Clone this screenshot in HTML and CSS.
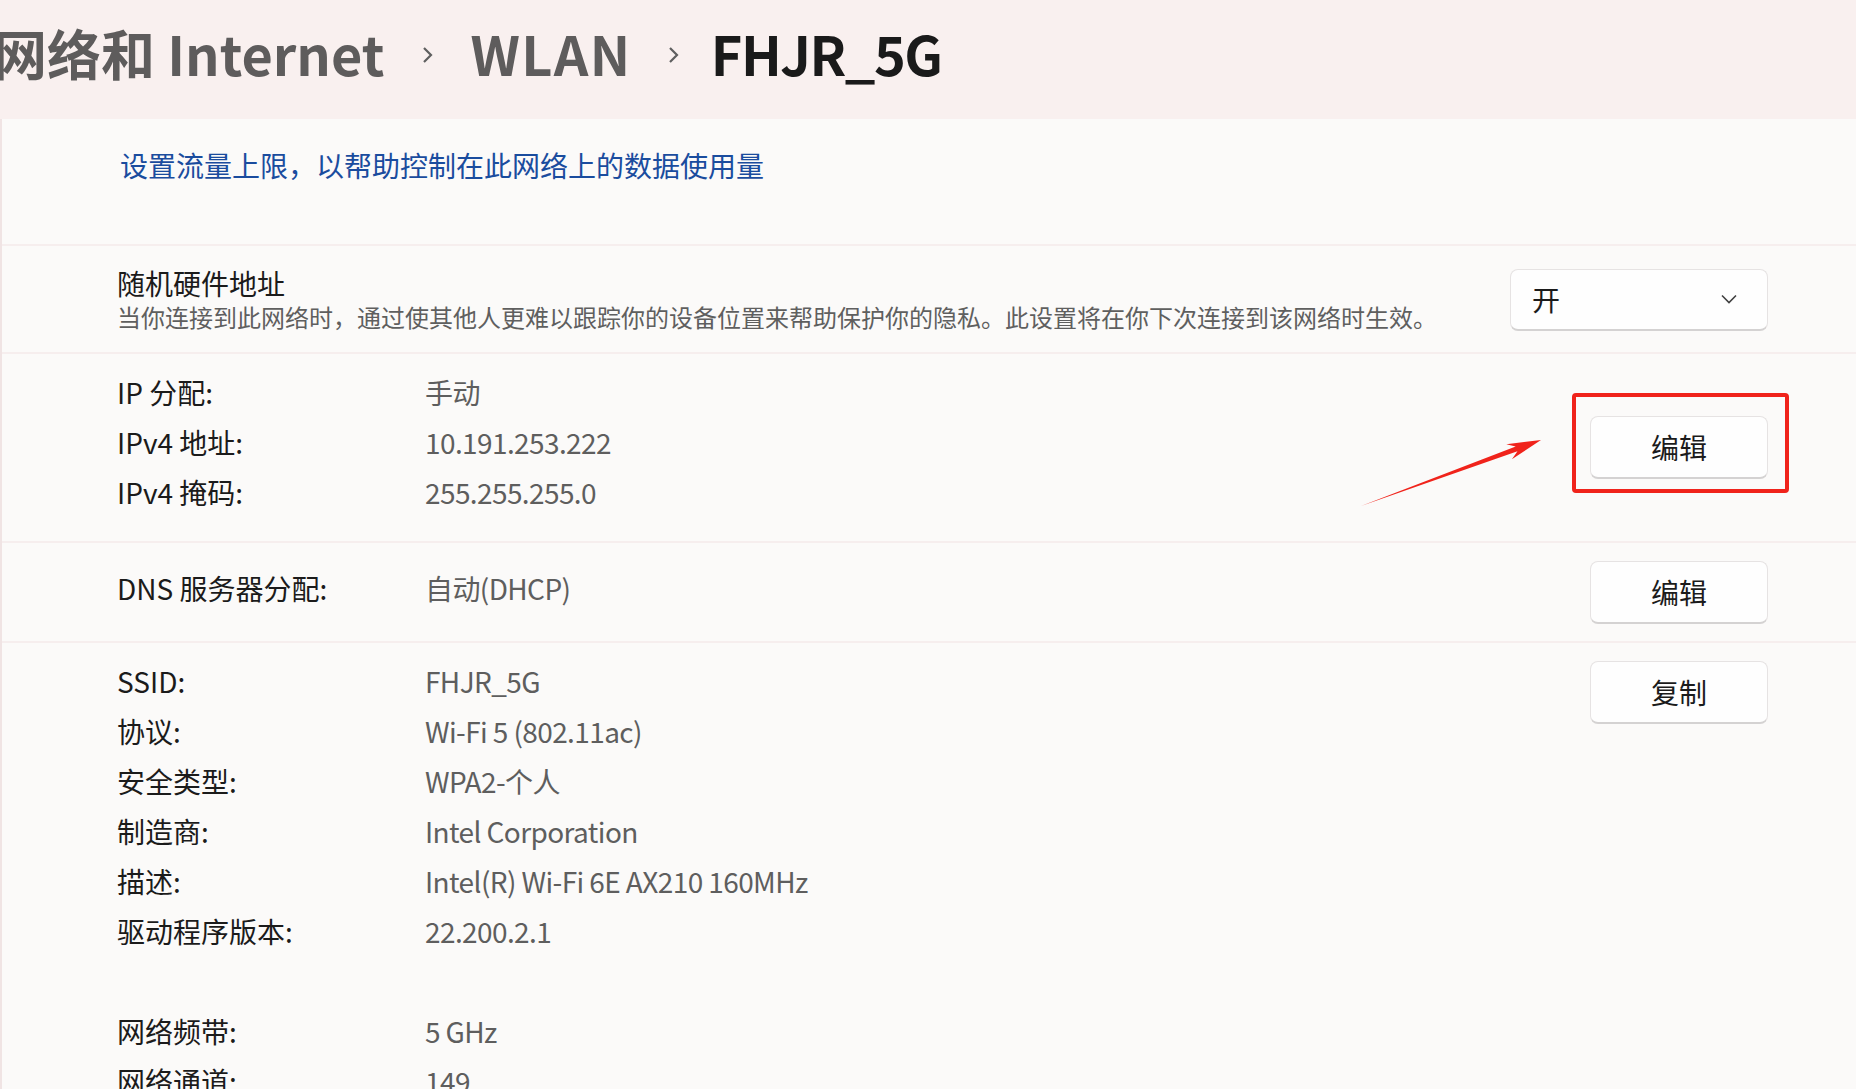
FILE: index.html
```html
<!DOCTYPE html>
<html>
<head>
    <title>WLAN - FHJR_5G</title>
    <link rel="stylesheet" href="styles.css">
</head>
<body>
    <header class="crumbs">
        <span class="crumb">网络和 Internet</span>
        <svg class="crumb-sep" width="12" height="18" viewBox="0 0 12 18"><path d="M2 2 L9 9 L2 16" fill="none" stroke="#5f5f5f" stroke-width="2.2"/></svg>
        <span class="crumb wide">WLAN</span>
        <svg class="crumb-sep last" width="12" height="18" viewBox="0 0 12 18"><path d="M2 2 L9 9 L2 16" fill="none" stroke="#5f5f5f" stroke-width="2.2"/></svg>
        <span class="crumb current">FHJR_5G</span>
    </header>

    <main class="panel">
        <section class="card card-link">
            <a class="link" href="javascript:void(0);">设置流量上限，以帮助控制在此网络上的数据使用量</a>
        </section>

        <section class="card card-setting">
            <div class="setting-text">
                <div class="setting-title">随机硬件地址</div>
                <div class="setting-desc">当你连接到此网络时，通过使其他人更难以跟踪你的设备位置来帮助保护你的隐私。此设置将在你下次连接到该网络时生效。</div>
            </div>
            <div class="dropdown">
                <span>开</span>
                <svg width="16" height="10" viewBox="0 0 16 10"><path d="M1 1.5 L8 8.5 L15 1.5" fill="none" stroke="#404040" stroke-width="1.6"/></svg>
            </div>
        </section>

        <section class="card card-info card-ip">
            <div class="info-list">
                <div class="info-row"><span class="label">IP 分配:</span><span class="value">手动</span></div>
                <div class="info-row"><span class="label">IPv4 地址:</span><span class="value">10.191.253.222</span></div>
                <div class="info-row"><span class="label">IPv4 掩码:</span><span class="value">255.255.255.0</span></div>
            </div>
            <button class="btn" type="button">编辑</button>
            <!-- annotation drawn over the screenshot -->
            <div class="mark-box"></div>
            <svg class="mark-arrow" width="190" height="80" viewBox="0 0 190 80">
                <polygon points="6,76 162.5,21.2 156.9,29.2 186,10 151.3,14.2 160.7,16.5" fill="#f0231b"/>
            </svg>
        </section>

        <section class="card card-info card-dns">
            <div class="info-list">
                <div class="info-row"><span class="label">DNS 服务器分配:</span><span class="value">自动(DHCP)</span></div>
            </div>
            <button class="btn" type="button">编辑</button>
        </section>

        <section class="card card-info card-props">
            <div class="info-list">
                <div class="info-row"><span class="label">SSID:</span><span class="value">FHJR_5G</span></div>
                <div class="info-row"><span class="label">协议:</span><span class="value">Wi-Fi 5 (802.11ac)</span></div>
                <div class="info-row"><span class="label">安全类型:</span><span class="value">WPA2-个人</span></div>
                <div class="info-row"><span class="label">制造商:</span><span class="value">Intel Corporation</span></div>
                <div class="info-row"><span class="label">描述:</span><span class="value">Intel(R) Wi-Fi 6E AX210 160MHz</span></div>
                <div class="info-row"><span class="label">驱动程序版本:</span><span class="value">22.200.2.1</span></div>
                <div class="info-row blank"></div>
                <div class="info-row"><span class="label">网络频带:</span><span class="value">5 GHz</span></div>
                <div class="info-row"><span class="label">网络通道:</span><span class="value">149</span></div>
            </div>
            <button class="btn" type="button">复制</button>
        </section>
    </main>
</body>
</html>
```

FILE: styles.css
```css
body {
    margin: 0;
    padding: 0;
    font-family: "Noto Sans CJK SC", "Noto Sans", sans-serif;
    background-color: #f9f0ef;
    color: #1b1b1b;
    overflow: hidden;
}

/* breadcrumb title */
.crumbs {
    height: 119px;
    box-sizing: border-box;
    padding-top: 26px;
    margin-left: -7px;
    display: flex;
    align-items: flex-start;
    white-space: nowrap;
}

.crumb {
    font-size: 54px;
    line-height: 1;
    font-weight: 600;
    color: #5e5c5c;
}

.crumb.wide {
    letter-spacing: 1.5px;
}

.crumb.current {
    color: #1a1a1a;
    letter-spacing: -1.5px;
}

.crumb-sep {
    margin: 20px 36px 0 38px;
}

.crumb-sep.last {
    margin-left: 36px;
    margin-right: 31px;
}

/* content panel */
.panel {
    background-color: #f6eeee;
    border-left: 2px solid #f0e4e4;
}

.card {
    background-color: #fbfaf9;
    margin-bottom: 2px;
    display: flex;
    padding-left: 115px;
    padding-right: 88px;
}

.card-link {
    height: 125px;
    padding-top: 0;
    padding-left: 118px;
    box-sizing: border-box;
}

.link {
    font-size: 28px;
    line-height: 40px;
    margin-top: 26px;
    color: #1a4c9e;
    text-decoration: none;
}

.card-setting {
    height: 106px;
    align-items: center;
    justify-content: space-between;
}

.setting-text {
    margin-top: 3px;
}

.setting-title {
    font-size: 28px;
    line-height: 36px;
    margin-top: -3px;
}

.setting-desc {
    font-size: 24px;
    line-height: 32px;
    color: #5f5f5f;
}

.dropdown {
    width: 258px;
    height: 62px;
    box-sizing: border-box;
    border: 1px solid #e6e3e3;
    border-bottom: 2px solid #d4d2d2;
    border-radius: 8px;
    background-color: #fefefe;
    display: flex;
    align-items: center;
    justify-content: space-between;
    padding: 0 30px 0 21px;
    font-size: 28px;
    margin-top: 1px;
}

/* info cards */
.card-info {
    justify-content: space-between;
    position: relative;
}

.card-ip {
    height: 187px;
    align-items: center;
}

.card-dns {
    height: 98px;
    align-items: center;
}

.card-props {
    align-items: flex-start;
    padding-top: 13px;
    padding-bottom: 40px;
}

.info-row {
    display: flex;
    height: 50px;
    line-height: 50px;
    font-size: 28px;
}

.card-dns .info-row {
    margin-top: -8px;
}

.card-ip .info-list {
    margin-top: -12px;
}

.label {
    width: 308px;
    color: #1b1b1b;
}

.value {
    color: #5e5e5e;
    letter-spacing: -0.6px;
    font-variant-numeric: proportional-nums;
}

.btn {
    width: 178px;
    height: 63px;
    box-sizing: border-box;
    border: 1px solid #e6e3e3;
    border-bottom: 2px solid #d4d2d2;
    border-radius: 8px;
    background-color: #fefefe;
    font-family: inherit;
    font-size: 28px;
    color: #1b1b1b;
    padding: 0;
}

.card-props .btn {
    margin-top: 5px;
}

/* annotation */
.mark-box {
    position: absolute;
    right: 67px;
    top: 39px;
    width: 217px;
    height: 100px;
    box-sizing: border-box;
    border: 4px solid #f0231b;
    border-radius: 4px;
}

.mark-arrow {
    position: absolute;
    right: 311px;
    top: 76px;
}
```
